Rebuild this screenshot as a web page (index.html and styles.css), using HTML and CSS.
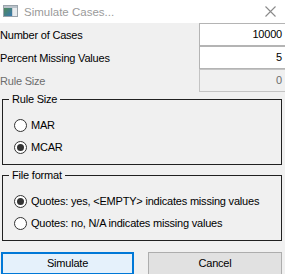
FILE: index.html
```html
<!DOCTYPE html>
<html>
<head>
<meta charset="utf-8">
<link rel="stylesheet" href="styles.css">
</head>
<body>
<div class="dialog">
  <div class="titlebar">
    <svg class="app-icon" width="15" height="12" viewBox="0 0 15 12">
      <defs>
        <linearGradient id="g" x1="0" y1="0" x2="1" y2="1">
          <stop offset="0" stop-color="#4f8a5a"/>
          <stop offset="1" stop-color="#3a78b0"/>
        </linearGradient>
      </defs>
      <rect x="0.5" y="0.5" width="14" height="11" fill="#e8ecef" stroke="#9aa3ab"/>
      <rect x="1" y="1" width="13" height="2" fill="#b9c2ca"/>
      <rect x="1" y="3" width="8" height="8" fill="url(#g)"/>
      <rect x="9" y="3" width="1" height="8" fill="#c9d1d8"/>
    </svg>
    <span class="title">Simulate Cases...</span>
    <svg class="close" width="11" height="11" viewBox="0 0 11 11">
      <path d="M0.5 0.5 L10.5 10.5 M10.5 0.5 L0.5 10.5" stroke="#8a8a8a" stroke-width="1.1" fill="none"/>
    </svg>
  </div>
  <div class="content">
    <div class="rows">
      <div class="row"><span class="label">Number of Cases</span><div class="field">10000</div></div>
      <div class="row"><span class="label">Percent Missing Values</span><div class="field">5</div></div>
      <div class="row disabled"><span class="label">Rule Size</span><div class="field">0</div></div>
    </div>
    <fieldset class="group group-rule">
      <legend>Rule Size</legend>
      <div class="radio"><span class="dot"></span><span>MAR</span></div>
      <div class="radio"><span class="dot checked"></span><span>MCAR</span></div>
    </fieldset>
    <fieldset class="group group-file">
      <legend>File format</legend>
      <div class="radio"><span class="dot checked"></span><span>Quotes: yes, &lt;EMPTY&gt; indicates missing values</span></div>
      <div class="radio"><span class="dot"></span><span>Quotes: no, N/A indicates missing values</span></div>
    </fieldset>
    <div class="buttons">
      <div class="btn primary">Simulate</div>
      <div class="btn">Cancel</div>
    </div>
  </div>
</div>
</body>
</html>
```
FILE: styles.css
```css
html, body {
  margin: 0;
  padding: 0;
}
body {
  width: 285px;
  height: 274px;
  overflow: hidden;
  background: #f0f0f0;
  font-family: "Liberation Sans", Arial, sans-serif;
  font-size: 11px;
  letter-spacing: -0.2px;
  color: #000;
}
.dialog {
  display: flex;
  flex-direction: column;
}
.titlebar {
  height: 23px;
  background: #fff;
  display: flex;
  align-items: center;
  padding-left: 3px;
  padding-right: 9px;
  box-sizing: border-box;
}
.app-icon {
  margin-top: -1px;
}
.title {
  margin-left: 6px;
  font-size: 11.5px;
  letter-spacing: 0;
  color: #9a9a9a;
  flex: 1;
}
.close {
  margin-top: -1px;
}
.content {
  display: flex;
  flex-direction: column;
  background: #f0f0f0;
}
.rows {
  display: flex;
  flex-direction: column;
}
.row {
  display: flex;
  align-items: center;
  justify-content: space-between;
  height: 23px;
}
.field {
  width: 86px;
  height: 23px;
  box-sizing: border-box;
  border: 1px solid #b4b4b4;
  border-right: none;
  background: #fff;
  text-align: right;
  padding-right: 3px;
  line-height: 21px;
}
.row.disabled .label {
  color: #6d6d6d;
}
.row.disabled .field {
  background: #f0f0f0;
  color: #6d6d6d;
  border-color: #c4c4c4;
}
.group {
  margin: 0 3px 0 2px;
  padding: 0 0 6px 0;
  border: 1px solid #202020;
  min-width: 0;
}
.group legend {
  margin-left: 6px;
  padding: 0 3px;
  height: 14px;
  line-height: 14px;
}
.group-rule {
  margin-top: 0;
}
.group-file {
  margin-top: 3px;
}
.radio {
  display: flex;
  align-items: center;
  height: 22px;
  padding-left: 11px;
}
.group .radio:first-of-type {
  margin-top: 8px;
}
.dot {
  width: 13px;
  height: 13px;
  box-sizing: border-box;
  border: 1px solid #333;
  border-radius: 50%;
  background: #fff;
  margin-right: 4px;
  display: flex;
  align-items: center;
  justify-content: center;
}
.dot.checked::after {
  content: "";
  width: 7px;
  height: 7px;
  border-radius: 50%;
  background: #333;
}
.buttons {
  display: flex;
  justify-content: space-between;
  margin: 11px 3px 0 1px;
}
.btn {
  width: 134px;
  height: 23px;
  box-sizing: border-box;
  border: 1px solid #adadad;
  background: #e1e1e1;
  text-align: center;
  line-height: 21px;
}
.btn.primary {
  width: 133px;
  border: 2px solid #0078d7;
  background: #e5f1fb;
  line-height: 19px;
}
```
